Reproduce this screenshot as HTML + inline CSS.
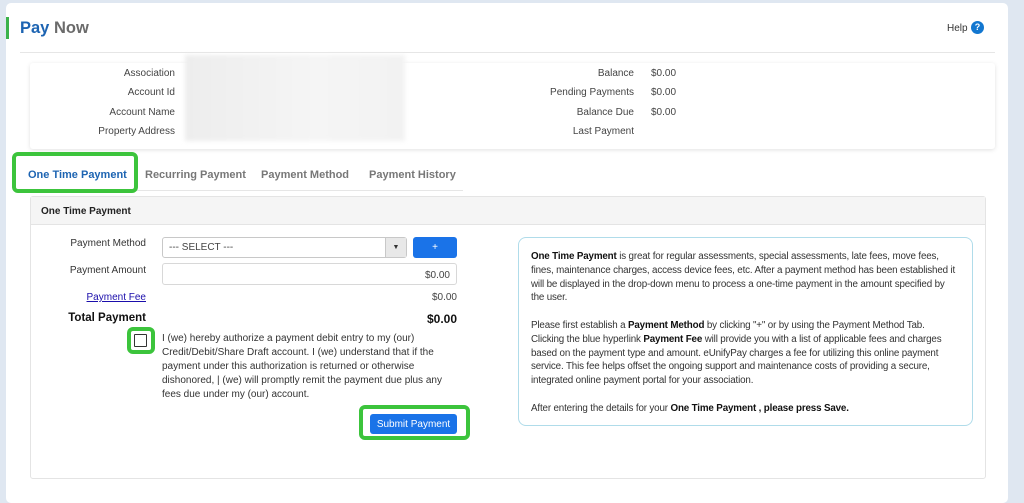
<!DOCTYPE html>
<html><head><meta charset="utf-8"><style>
*{box-sizing:border-box;margin:0;padding:0}
body{width:1024px;height:497px;background:#dfe7f1;font-family:"Liberation Sans",sans-serif;position:relative;overflow:hidden;color:#333}
.abs{position:absolute}
.card{left:6px;top:3px;width:1002px;height:500px;background:#fff;border-radius:5px}
.r{text-align:right;font-size:10px;color:#444;width:150px}
.v{font-size:10px;color:#444}
.tab{font-size:11px;font-weight:bold;color:#777;top:169px}
p{margin:0}
</style></head><body>
<div class="abs card"></div>
<div class="abs" style="left:6px;top:17px;width:3px;height:22px;background:#3bb24a"></div>
<div class="abs" style="left:20px;top:19px;font-size:16.5px;font-weight:bold"><span style="color:#1d64b2">Pay</span> <span style="color:#6b6b6b">Now</span></div>
<div class="abs" style="left:947px;top:23px;font-size:10px;color:#333">Help</div>
<div class="abs" style="left:971px;top:21px;width:13px;height:13px;border-radius:50%;background:#1377d0;color:#fff;font-size:9px;font-weight:bold;text-align:center;line-height:13px">?</div>
<div class="abs" style="left:20px;top:52px;width:975px;height:1px;background:#e6e6e6"></div>
<div class="abs" style="left:30px;top:63px;width:965px;height:86px;background:#fff;box-shadow:0 1px 4px rgba(0,0,0,.12);border-radius:3px"></div>
<div class="abs" style="left:185px;top:55px;width:220px;height:86px;background:linear-gradient(90deg,#ededed,#f5f5f5 60%,#f2f2f2);filter:blur(2px)"></div>
<div class="abs r" style="left:25px;top:68px">Association</div>
<div class="abs r" style="left:25px;top:87px">Account Id</div>
<div class="abs r" style="left:25px;top:107px">Account Name</div>
<div class="abs r" style="left:25px;top:126px">Property Address</div>
<div class="abs r" style="left:484px;top:68px">Balance</div>
<div class="abs r" style="left:484px;top:87px">Pending Payments</div>
<div class="abs r" style="left:484px;top:107px">Balance Due</div>
<div class="abs r" style="left:484px;top:126px">Last Payment</div>
<div class="abs v" style="left:651px;top:68px">$0.00</div>
<div class="abs v" style="left:651px;top:87px">$0.00</div>
<div class="abs v" style="left:651px;top:107px">$0.00</div>
<div class="abs" style="left:30px;top:190px;width:433px;height:1px;background:#e6e6e6"></div>
<div class="abs tab" style="left:28px;color:#1d64b2">One Time Payment</div>
<div class="abs tab" style="left:145px">Recurring Payment</div>
<div class="abs tab" style="left:261px">Payment Method</div>
<div class="abs tab" style="left:369px">Payment History</div>
<div class="abs" style="left:12px;top:152px;width:126px;height:41px;border:4px solid #3cc43c;border-radius:6px"></div>
<div class="abs" style="left:30px;top:196px;width:956px;height:283px;border:1px solid #e4e4e4;border-radius:3px"></div>
<div class="abs" style="left:31px;top:197px;width:954px;height:28px;background:#f5f5f5;border-bottom:1px solid #e4e4e4"></div>
<div class="abs" style="left:41px;top:206px;font-size:10px;font-weight:bold;color:#222">One Time Payment</div>
<div class="abs r" style="left:-4px;top:238px;color:#333">Payment Method</div>
<div class="abs r" style="left:-4px;top:265px;color:#333">Payment Amount</div>
<div class="abs r" style="left:-4px;top:292px;color:#1a0dab;text-decoration:underline">Payment Fee</div>
<div class="abs r" style="left:-4px;top:312px;color:#111;font-size:11.5px;font-weight:bold">Total Payment</div>
<div class="abs" style="left:162px;top:237px;width:245px;height:21px;border:1px solid #c8c8c8;border-radius:3px;font-size:10px;color:#444;padding:4px 6px">--- SELECT ---</div>
<div class="abs" style="left:385px;top:238px;width:21px;height:19px;background:#e8e8e8;border-left:1px solid #c8c8c8;font-size:7px;text-align:center;line-height:19px">▼</div>
<div class="abs" style="left:413px;top:237px;width:44px;height:21px;background:#1a73e8;border-radius:3px;color:#fff;font-size:10px;text-align:center;line-height:21px">+</div>
<div class="abs" style="left:162px;top:263px;width:295px;height:22px;border:1px solid #d8d8d8;border-radius:3px;font-size:10px;color:#444;text-align:right;padding:6px 6px">$0.00</div>
<div class="abs v" style="left:400px;top:292px;width:57px;text-align:right">$0.00</div>
<div class="abs" style="left:400px;top:312px;width:57px;text-align:right;font-size:12px;font-weight:bold;color:#111">$0.00</div>
<div class="abs" style="left:127px;top:327px;width:28px;height:27px;border:4px solid #3cc43c;border-radius:6px"></div>
<div class="abs" style="left:134px;top:334px;width:13px;height:13px;border:1.5px solid #333;border-radius:1px"></div>
<div class="abs" style="left:162px;top:332px;width:300px;font-size:10px;line-height:14px;color:#333">I (we) hereby authorize a payment debit entry to my (our) Credit/Debit/Share Draft account. I (we) understand that if the payment under this authorization is returned or otherwise dishonored, | (we) will promptly remit the payment due plus any fees due under my (our) account.</div>
<div class="abs" style="left:359px;top:405px;width:111px;height:35px;border:4px solid #3cc43c;border-radius:6px"></div>
<div class="abs" style="left:370px;top:414px;width:87px;height:20px;background:#1a73e8;border-radius:3px;color:#fff;font-size:10px;text-align:center;line-height:21px">Submit Payment</div>
<div class="abs" style="left:518px;top:237px;width:455px;height:189px;border:1px solid #b0dcea;border-radius:8px;padding:12px 12px;font-size:9.8px;letter-spacing:-0.15px;line-height:13.8px;color:#333">
<p><b style="color:#111">One Time Payment</b> is great for regular assessments, special assessments, late fees, move fees, fines, maintenance charges, access device fees, etc. After a payment method has been established it will be displayed in the drop-down menu to process a one-time payment in the amount specified by the user.</p><br>
<p>Please first establish a <b style="color:#111">Payment Method</b> by clicking "+" or by using the Payment Method Tab. Clicking the blue hyperlink <b style="color:#111">Payment Fee</b> will provide you with a list of applicable fees and charges based on the payment type and amount. eUnifyPay charges a fee for utilizing this online payment service. This fee helps offset the ongoing support and maintenance costs of providing a secure, integrated online payment portal for your association.</p><br>
<p>After entering the details for your <b style="color:#111">One Time Payment , please press Save.</b></p>
</div>
</body></html>
